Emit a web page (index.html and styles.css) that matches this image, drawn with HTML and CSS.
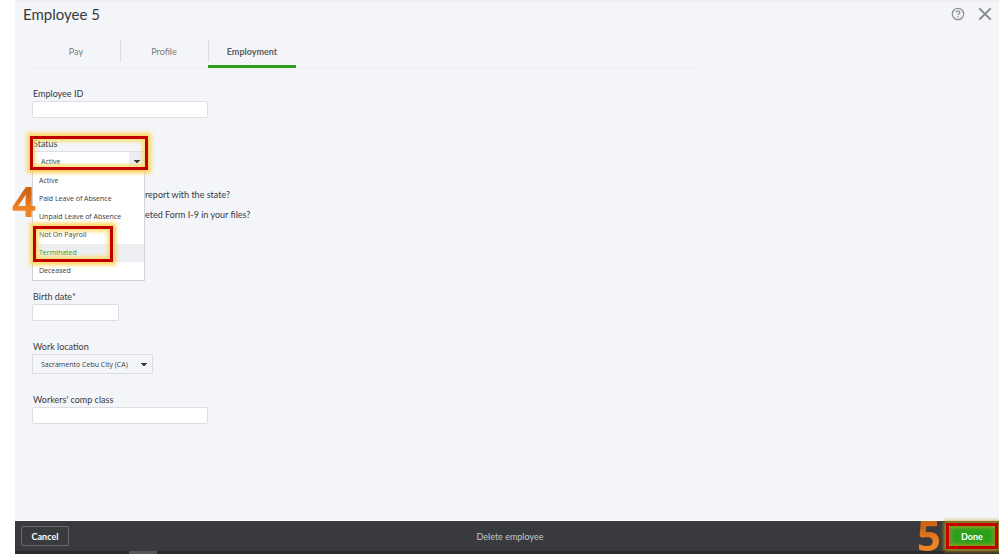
FILE: index.html
```html
<!DOCTYPE html>
<html lang="en">
<head>
<meta charset="UTF-8">
<meta name="viewport" content="width=device-width, initial-scale=1">
<title>Employee 5</title>
<link rel="stylesheet" href="styles.css">
</head>
<body>
<div class="panel">
  <header class="panel-header">
    <h1>Employee 5</h1>
    <div class="header-actions">
      <button type="button" class="icon-button" aria-label="Help">
        <svg width="14" height="14" viewBox="0 0 14 14" fill="none" stroke="#8a8d92">
          <circle cx="7" cy="7" r="5.7" stroke-width="1.2"/>
          <path d="M5.2 5.6c0-2.4 3.6-2.3 3.6-.2 0 1.3-1.8 1.3-1.8 2.7" stroke-width="1.3"/>
          <path d="M7 9.3v1.3" stroke-width="1.3"/>
        </svg>
      </button>
      <button type="button" class="icon-button" aria-label="Close">
        <svg width="14" height="14" viewBox="0 0 14 14" fill="none" stroke="#85888d" stroke-width="1.9">
          <path d="M1.3 1.3l11.4 11.4M12.7 1.3l-11.4 11.4"/>
        </svg>
      </button>
    </div>
  </header>

  <main>
    <nav class="tabs">
      <a href="#pay">Pay</a>
      <a href="#profile">Profile</a>
      <a href="#employment" class="active" aria-current="page">Employment</a>
    </nav>

    <form id="employment-form">
      <div class="field">
        <label for="employee-id">Employee ID</label>
        <input type="text" id="employee-id">
      </div>

      <div class="field status-field">
        <label for="status">Status</label>
        <select id="status" class="status-select">
          <option>Active</option>
        </select>
        <ul class="menu">
          <li>Active</li>
          <li>Paid Leave of Absence</li>
          <li>Unpaid Leave of Absence</li>
          <li>Not On Payroll</li>
          <li class="selected">Terminated</li>
          <li>Deceased</li>
        </ul>
        <span class="highlight highlight-status"></span>
        <span class="highlight highlight-option"></span>
        <span class="step step-four">4</span>
      </div>

      <div class="questions">
        <p>report with the state?</p>
        <p>eted Form I-9 in your files?</p>
      </div>

      <div class="field">
        <label for="birth-date">Birth date*</label>
        <input type="text" id="birth-date" class="short">
      </div>

      <div class="field">
        <label for="work-location">Work location</label>
        <select id="work-location" class="location-select">
          <option>Sacramento Cebu City (CA)</option>
        </select>
      </div>

      <div class="field">
        <label for="comp-class">Workers' comp class</label>
        <input type="text" id="comp-class">
      </div>
    </form>
  </main>

  <footer>
    <button type="button" class="cancel">Cancel</button>
    <button type="button" class="delete">Delete employee</button>
    <div class="done-wrap">
      <button type="submit" form="employment-form" class="done">Done</button>
      <span class="highlight highlight-done"></span>
      <span class="step step-five">5</span>
    </div>
  </footer>
</div>
</body>
</html>
```
FILE: styles.css
```css
:root {
  --panel-color: #f4f5f8;
  --border-color: #dcdee1;
  --text-color: #393a3d;
  --green: #2ca01c;
  --bar-color: #393a3d;
  --arrow: conic-gradient(from -45deg at 50% 100%, #393a3d 90deg, transparent 0);
}

* {
  box-sizing: border-box;
}

body {
  margin: 0;
  padding-left: 15px;
  background: #fff;
  color: var(--text-color);
  font-family: Lato, "Liberation Sans", sans-serif;
  font-size: 9px;
}

button,
input,
select {
  font-family: inherit;
  font-size: inherit;
  color: inherit;
}

.panel {
  min-height: 100vh;
  display: flex;
  flex-direction: column;
  background: var(--panel-color);
  border-top: 2px solid #eceef0;
}

.panel-header {
  display: flex;
  justify-content: space-between;
  align-items: center;
  height: 24px;
  padding: 0 7px 0 8px;
}

h1 {
  margin: 0;
  font-size: 15px;
  font-weight: 400;
}

.header-actions {
  display: flex;
  gap: 13px;
}

.icon-button {
  display: flex;
  padding: 0;
  border: none;
  background: none;
}

main {
  flex: 1;
  padding: 14px 17px;
}

.tabs {
  display: flex;
  max-width: 669px;
  border-bottom: 1px solid #efefef;
}

.tabs a {
  width: 88px;
  height: 28px;
  border-bottom: 3px solid transparent;
  color: #7b7c80;
  line-height: 23px;
  text-align: center;
  text-decoration: none;
  background: linear-gradient(#d8dadd, #d8dadd) left top / 1px 22px no-repeat;
}

.tabs a:first-child {
  background: none;
}

.tabs .active {
  border-bottom-color: var(--green);
  color: #5c5d61;
  font-weight: 700;
}

form {
  display: flex;
  flex-direction: column;
  gap: 20px;
  padding-top: 19px;
}

.field {
  display: flex;
  flex-direction: column;
  align-items: flex-start;
  gap: 1px;
}

.field label {
  padding-left: 1px;
  line-height: 12px;
}

.field input {
  width: 176px;
  height: 17px;
  padding: 0 6px;
  border: 1px solid var(--border-color);
  border-radius: 2px;
  background: #fff;
}

.field .short {
  width: 87px;
}

select,
.menu {
  font-family: "Open Sans", "Liberation Sans", sans-serif;
  font-size: 7px;
}

select {
  appearance: none;
  height: 20px;
  padding: 0 8px;
  border: 1px solid var(--border-color);
  border-radius: 1px;
}

.location-select {
  width: 121px;
  background: var(--arrow) right 5px center / 6px 3px no-repeat;
}

.status-field {
  position: relative;
}

.status-select {
  width: 113px;
  background: var(--arrow) right 4px center / 6px 3px no-repeat,
    linear-gradient(#eceef1, #eceef1) right top / 15px 100% no-repeat,
    #fff;
}

.menu {
  position: absolute;
  top: 33px;
  left: 0;
  width: 113px;
  margin: 0;
  padding: 0;
  border: 1px solid #d0d2d5;
  background: #fff;
  list-style: none;
}

.menu li {
  height: 18px;
  padding-left: 6px;
  line-height: 18px;
}

.menu .selected {
  background: #eceef1;
  color: var(--green);
}

.questions {
  margin: -6px 0 46px;
  padding-left: 113px;
}

.questions p {
  margin: 0;
  line-height: 20px;
}

/* callouts */
.highlight {
  position: absolute;
  border: 3px solid #c00000;
  box-shadow: 0 0 4px 3px #ffd65a, inset 0 0 4px 2px #ffd65a;
  pointer-events: none;
}

.highlight-status {
  top: -2px;
  left: -2px;
  width: 118px;
  height: 34px;
}

.highlight-option {
  top: 88px;
  left: 1px;
  width: 80px;
  height: 36px;
}

.highlight-done {
  top: -4px;
  right: 1px;
  width: 52px;
  height: 26px;
  box-shadow: 0 0 4px 2px #b0921f, inset 0 0 3px 2px #8fa51c;
}

.step {
  position: absolute;
  background: linear-gradient(#cf6416 25%, #f08424 75%);
  background-clip: text;
  color: transparent;
  font-family: "Open Sans", "Liberation Sans", sans-serif;
  font-size: 42px;
  font-weight: 700;
  line-height: 32px;
}

.step-four {
  top: 47px;
  left: -20px;
}

.step-five {
  top: -8px;
  right: 58px;
}

footer {
  display: grid;
  grid-template-columns: 1fr auto 1fr;
  align-items: center;
  height: 34px;
  padding: 0 0 3px 6px;
  border-top: 1px solid #fff;
  background: linear-gradient(#55565a, #55565a) 114px 100% / 28px 3px no-repeat,
    linear-gradient(#2b2a2a, #2b2a2a) 0 100% / 100% 3px no-repeat,
    var(--bar-color);
}

footer button {
  border: none;
  background: none;
  color: #fff;
}

.cancel {
  justify-self: start;
  width: 48px;
  height: 20px;
  padding: 0;
  border: 1px solid #6b6c72;
  border-radius: 2px;
  font-weight: 700;
}

.delete {
  padding: 0;
  color: #c4c6ca;
}

.done-wrap {
  position: relative;
  justify-self: end;
  padding-right: 6px;
}

.done {
  display: block;
  width: 42px;
  height: 18px;
  padding: 0;
  font-weight: 700;
}

footer .done {
  background: var(--green);
}
```
